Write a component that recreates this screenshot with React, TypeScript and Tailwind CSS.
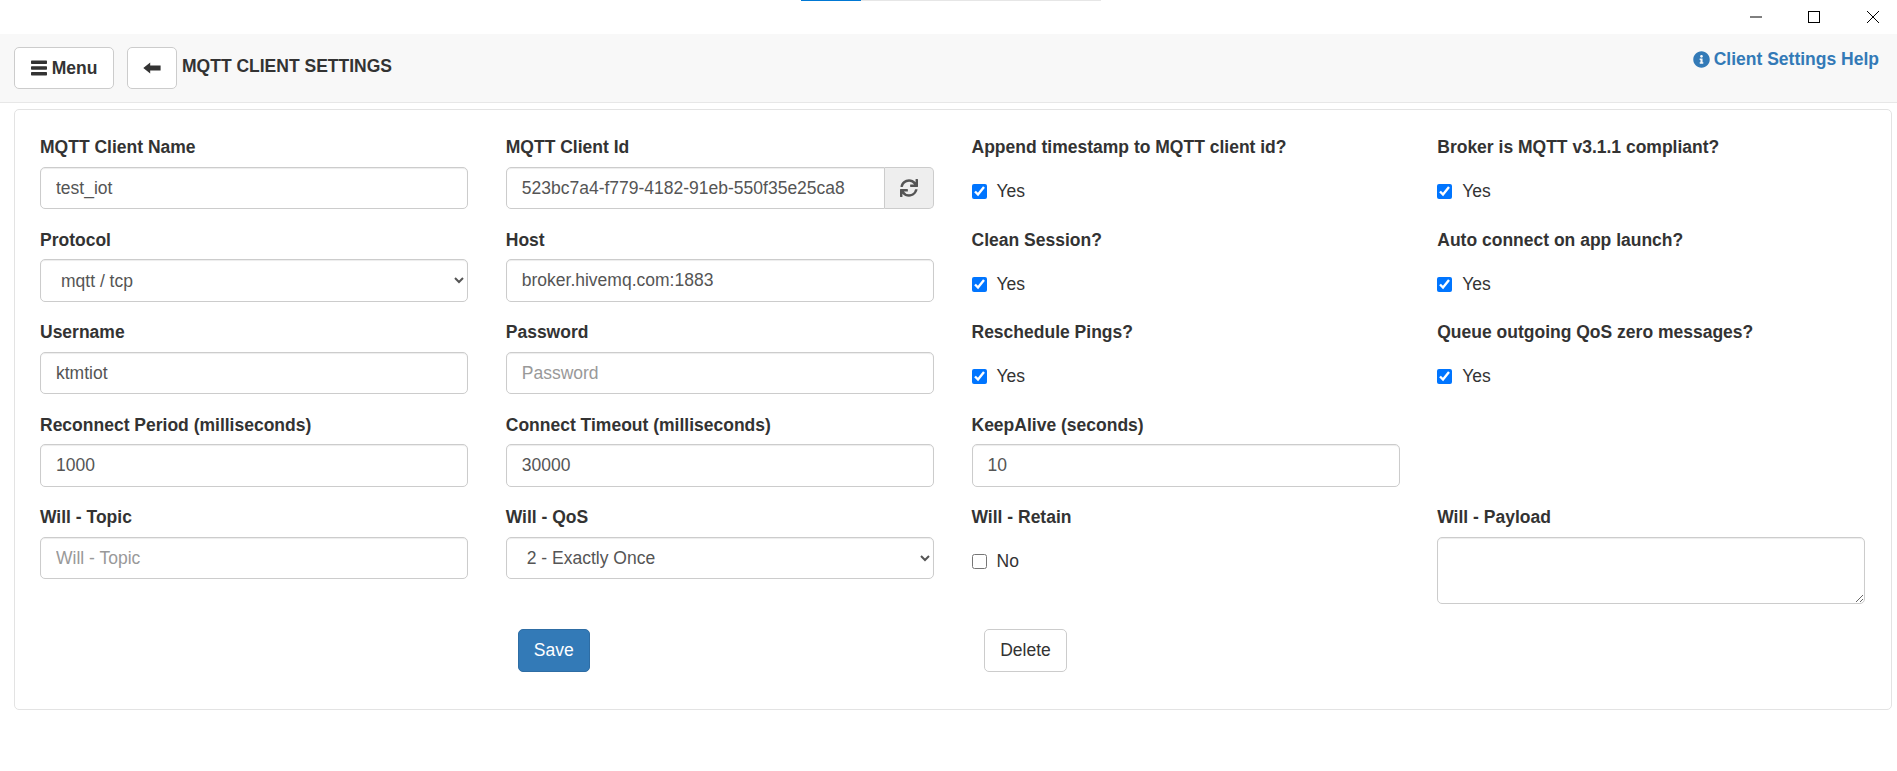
import React from 'react';
import { FaSync, FaInfoCircle } from 'react-icons/fa';

const inputClass =
  'w-full h-[42.5px] rounded-[5px] border border-[#ccc] bg-white px-[15px] text-[17.5px] text-[#555] placeholder:text-[#999] shadow-[inset_0_1px_1px_rgba(0,0,0,0.075)] outline-none';

const Label = ({ children }: { children: React.ReactNode }) => (
  <label className="block h-[20.25px] pt-[0.25px] mb-[9.75px] text-[17.5px] leading-[20px] font-bold text-[#333]">{children}</label>
);

const TextField = ({ label, value, placeholder }: { label: string; value?: string; placeholder?: string }) => (
  <div>
    <Label>{label}</Label>
    <input className={inputClass} defaultValue={value} placeholder={placeholder} />
  </div>
);

const SelectField = ({ label, value }: { label: string; value: string }) => (
  <div>
    <Label>{label}</Label>
    <select className={inputClass + ' pl-[16px]'} defaultValue={value}>
      <option>{value}</option>
    </select>
  </div>
);

const CheckField = ({ label, text, checked }: { label: string; text: string; checked: boolean }) => (
  <div>
    <Label>{label}</Label>
    <div className="flex items-center h-[20px] mt-[24.5px] text-[17.5px] text-[#333]">
      <input type="checkbox" defaultChecked={checked} className="w-[15px] h-[15px] m-0 mr-[10px]" />
      <span>{text}</span>
    </div>
  </div>
);

export default function App() {
  return (
    <div className="min-h-[771px] bg-white font-['Liberation_Sans',Arial,sans-serif] overflow-hidden">
      <div className="flex justify-center h-[1px] pl-[5px]">
        <div className="w-[60px] bg-[#0078d4]" />
        <div className="w-[240px] bg-[#e6e6e6]" />
      </div>
      <div className="flex justify-end h-[33px] items-center gap-[46px] pr-[18px]">
        <svg width="12" height="12" viewBox="0 0 12 12" className="mt-[-1px]"><path d="M0 6h12" stroke="#000" /></svg>
        <svg width="12" height="12" viewBox="0 0 12 12" className="mt-[-1px] mr-[1px]"><rect x="0.5" y="0.5" width="11" height="11" fill="none" stroke="#000" /></svg>
        <svg width="12" height="12" viewBox="0 0 12 12" className="mt-[-1px]"><path d="M0 0l12 12M12 0L0 12" stroke="#000" /></svg>
      </div>

      <div className="flex items-start h-[69px] bg-[#f8f8f8] border-b border-[#e7e7e7] pl-[14px] pr-[18px] pt-[13px]">
        <button className="flex items-center justify-center w-[100px] h-[42px] rounded-[5px] border border-[#ccc] bg-white text-[17.5px] font-bold text-[#333]">
          <svg width="16" height="16" viewBox="0 0 16 16" className="mr-[5px]" fill="#333">
            <rect x="0" y="0.5" width="16" height="3.5" rx="0.7" />
            <rect x="0" y="6.2" width="16" height="3.5" rx="0.7" />
            <rect x="0" y="12" width="16" height="3.5" rx="0.7" />
          </svg>
          Menu
        </button>
        <button className="flex items-center justify-center w-[50px] h-[42px] ml-[13px] rounded-[5px] border border-[#ccc] bg-white text-[#333]">
          <svg width="18" height="12" viewBox="0 0 18 12" fill="#333">
            <path d="M0.3 6L7.2 0.6V3.6H17.6V8.4H7.2V11.4Z" />
          </svg>
        </button>
        <span className="ml-[5px] mt-[9px] text-[17.5px] leading-[20px] font-bold text-[#333]">MQTT CLIENT SETTINGS</span>
        <a className="ml-auto flex items-center mt-[2px] text-[17.5px] leading-[20px] font-bold text-[#337ab7]">
          <FaInfoCircle className="w-[17px] h-[17px] mr-[4px]" />
          Client Settings Help
        </a>
      </div>

      <div className="mx-[14px] mr-[5px] mt-[6px] h-[601px] rounded-[5px] border border-[#e3e3e3] pl-[25px] pr-[26px] pt-[26.75px]">
        <div className="grid grid-cols-[428px_428px_428px_428px] gap-x-[37.75px] auto-rows-[92.5px]">
          <TextField label="MQTT Client Name" value="test_iot" />
          <div>
            <Label>MQTT Client Id</Label>
            <div className="flex h-[42.5px]">
              <input
                className="flex-1 min-w-0 h-[42.5px] rounded-l-[5px] border border-[#ccc] bg-white px-[15px] text-[17.5px] text-[#555] shadow-[inset_0_1px_1px_rgba(0,0,0,0.075)] outline-none"
                defaultValue="523bc7a4-f779-4182-91eb-550f35e25ca8"
              />
              <span className="flex items-center justify-center w-[49px] rounded-r-[5px] border border-l-0 border-[#ccc] bg-[#eee] text-[#555]">
                <FaSync className="w-[18px] h-[18px]" />
              </span>
            </div>
          </div>
          <CheckField label="Append timestamp to MQTT client id?" text="Yes" checked />
          <CheckField label="Broker is MQTT v3.1.1 compliant?" text="Yes" checked />

          <SelectField label="Protocol" value="mqtt / tcp" />
          <TextField label="Host" value="broker.hivemq.com:1883" />
          <CheckField label="Clean Session?" text="Yes" checked />
          <CheckField label="Auto connect on app launch?" text="Yes" checked />

          <TextField label="Username" value="ktmtiot" />
          <TextField label="Password" placeholder="Password" />
          <CheckField label="Reschedule Pings?" text="Yes" checked />
          <CheckField label="Queue outgoing QoS zero messages?" text="Yes" checked />

          <TextField label="Reconnect Period (milliseconds)" value="1000" />
          <TextField label="Connect Timeout (milliseconds)" value="30000" />
          <TextField label="KeepAlive (seconds)" value="10" />
          <div />

          <TextField label="Will - Topic" placeholder="Will - Topic" />
          <SelectField label="Will - QoS" value="2 - Exactly Once" />
          <CheckField label="Will - Retain" text="No" checked={false} />
          <div>
            <Label>Will - Payload</Label>
            <textarea className="block w-full h-[67px] rounded-[5px] border border-[#ccc] bg-white px-[15px] py-[8px] text-[17.5px] text-[#555] shadow-[inset_0_1px_1px_rgba(0,0,0,0.075)] outline-none" />
          </div>
        </div>
        <div className="grid grid-cols-[428px_428px_428px_428px] gap-x-[37.75px] mt-[29.25px]">
          <div />
          <div className="pl-[12px]">
            <button className="w-[72px] h-[43px] rounded-[5px] border border-[#2e6da4] bg-[#337ab7] text-[17.5px] text-white">Save</button>
          </div>
          <div className="pl-[12.5px]">
            <button className="w-[83px] h-[43px] rounded-[5px] border border-[#ccc] bg-white text-[17.5px] text-[#333]">Delete</button>
          </div>
          <div />
        </div>
      </div>
    </div>
  );
}
